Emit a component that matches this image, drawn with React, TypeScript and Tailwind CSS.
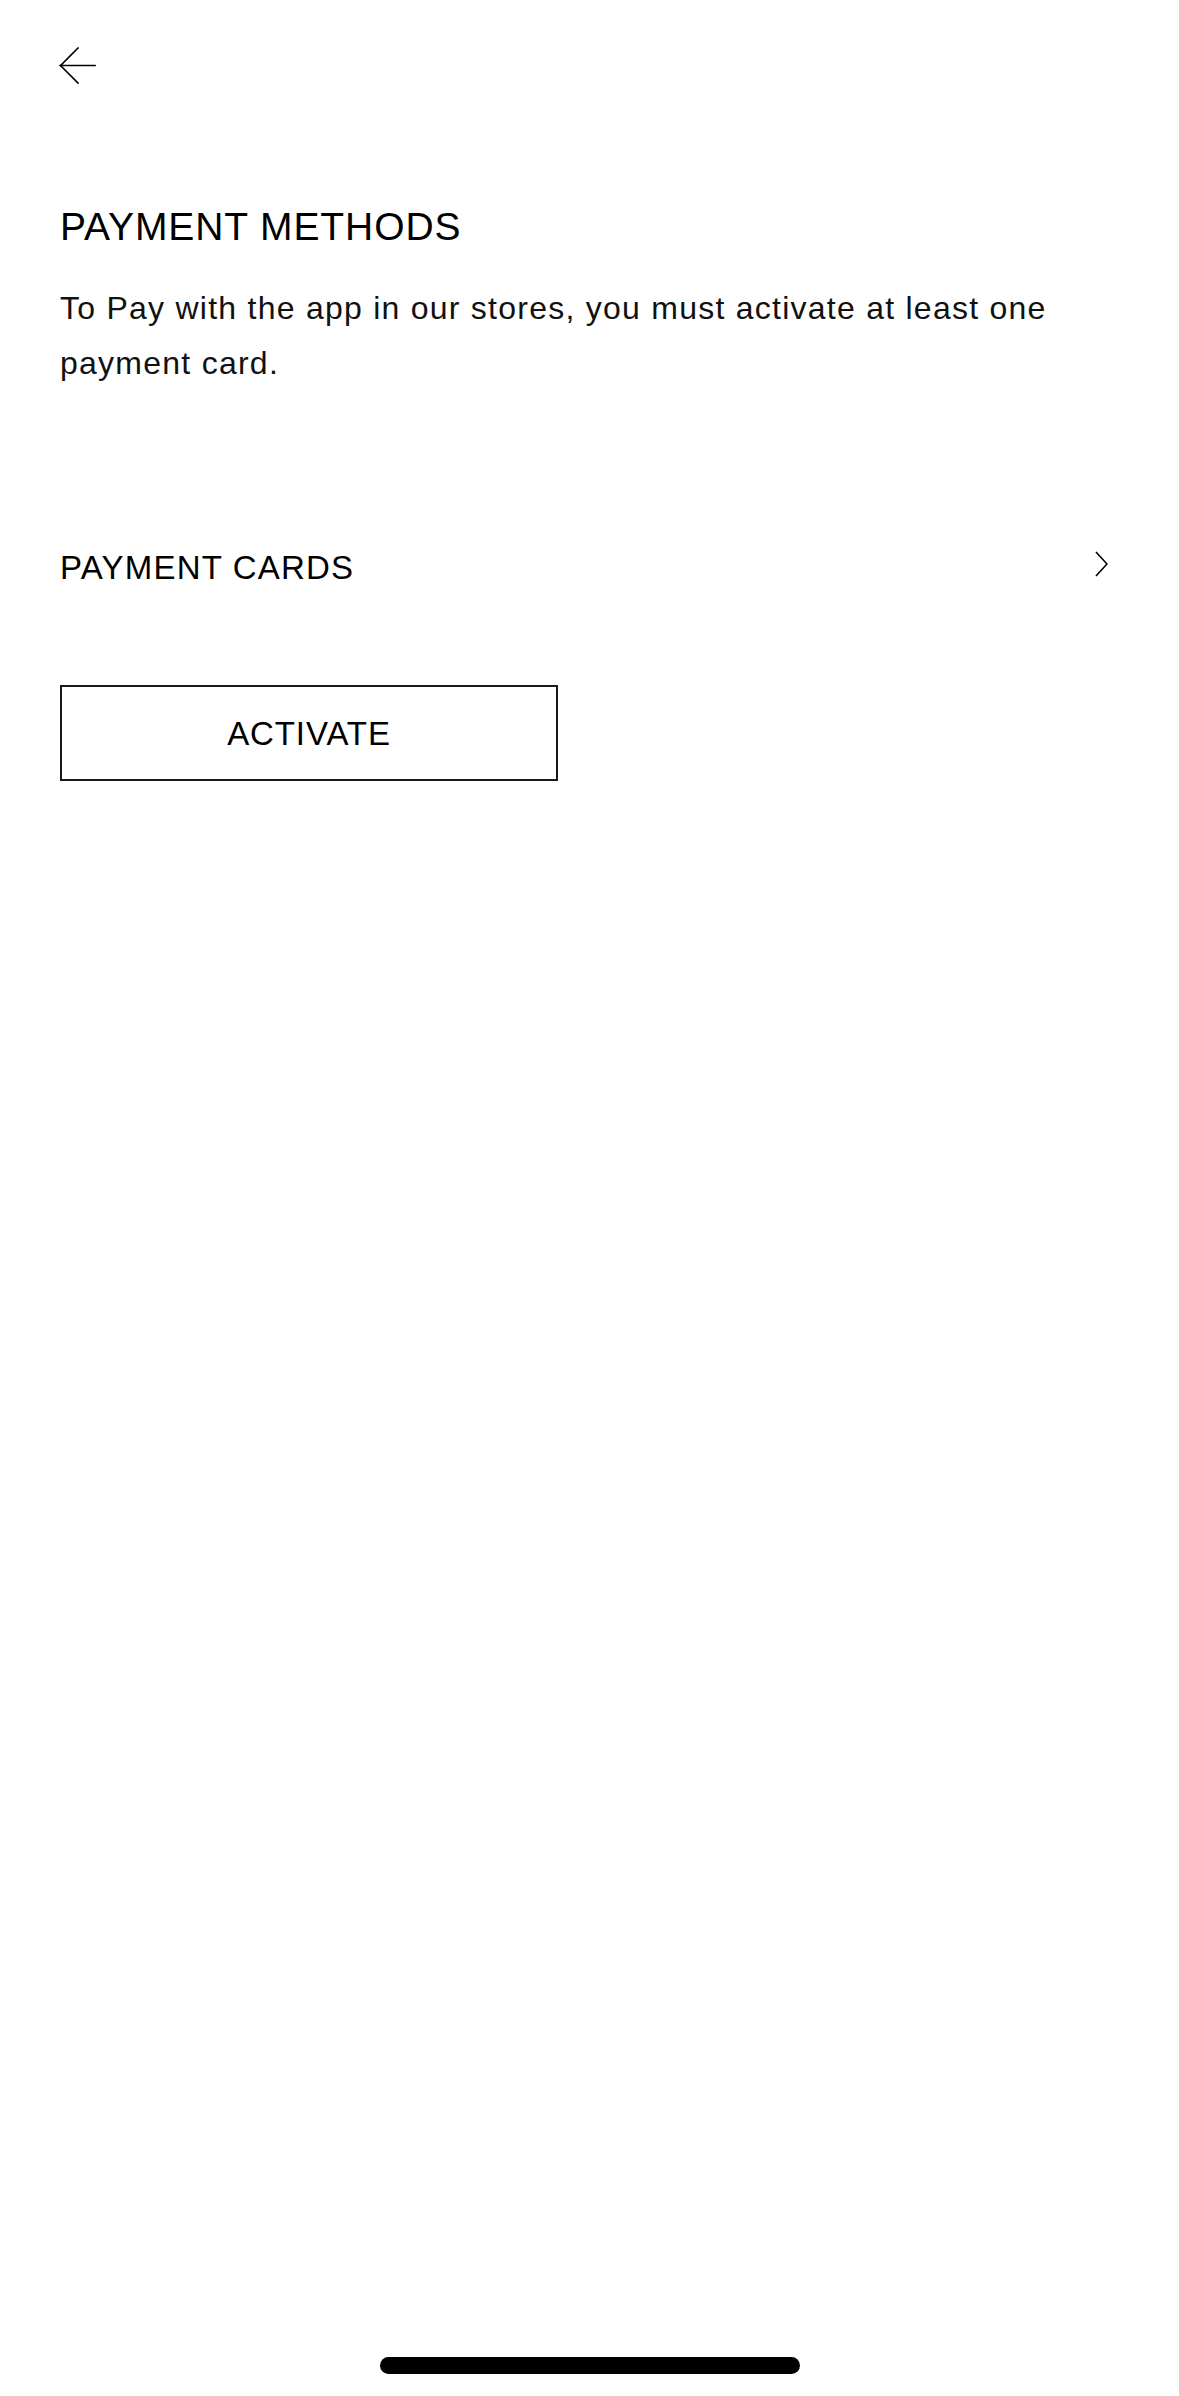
const BackArrow = () => (
    <svg width="38" height="38" viewBox="0 0 38 38" fill="none" stroke="#000" strokeWidth="1.6" strokeLinecap="square">
        <path d="M1.5 18.5H36" />
        <path d="M1.5 18.5L19 1" />
        <path d="M1.5 18.5L19 36" />
    </svg>
);

const Chevron = () => (
    <svg width="13" height="26" viewBox="0 0 13 26" fill="none" stroke="#000" strokeWidth="1.6" className="mb-[7px]">
        <path d="M1 1L12 13L1 25" />
    </svg>
);

export default function App() {
    return (
        <div className="relative flex min-h-[2396px] w-full flex-col bg-white px-[60px] text-black font-['Liberation_Sans',Arial,sans-serif]">
            <header className="pt-[47px]">
                <button type="button" className="-ml-[1px] block">
                    <BackArrow />
                </button>
            </header>

            <h1 className="mt-[122px] text-[39px] leading-[39px] tracking-[0.9px]">PAYMENT METHODS</h1>

            <p className="mt-[35px] text-[32px] leading-[55px] tracking-[1.25px] text-[#111]">
                To Pay with the app in our stores, you must activate at least one payment card.
            </p>

            <button type="button" className="mt-[160px] flex h-[33px] w-full items-center justify-between pr-[11px]">
                <span className="text-[33px] leading-[33px] tracking-[1.2px]">PAYMENT CARDS</span>
                <Chevron />
            </button>

            <button
                type="button"
                className="mt-[101px] flex h-[96px] w-[498px] items-center justify-center border-2 border-[#1a1a1a] text-[33px] leading-[33px] tracking-[0.9px]"
            >
                ACTIVATE
            </button>

            <div className="absolute bottom-[22px] left-1/2 h-[17px] w-[420px] -translate-x-1/2 rounded-full bg-black" />
        </div>
    );
}
